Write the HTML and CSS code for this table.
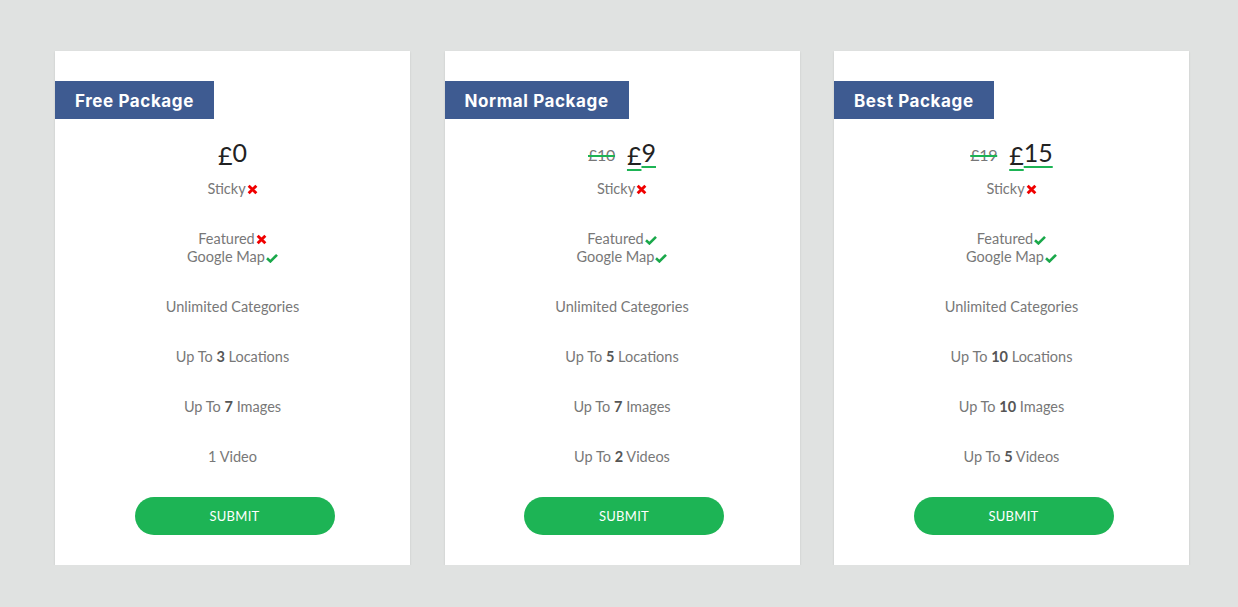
FILE: index.html
```html
<!DOCTYPE html>
<html>
<head>
<meta charset="utf-8">
<link rel="stylesheet" href="styles.css">
</head>
<body>
<div class="pricing">
  <div class="card">
    <div class="tag">Free Package</div>
    <div class="price"><span class="now"><span class="cur">£</span><span class="num">0</span></span></div>
    <ul class="features">
      <li>Sticky<svg class="ic" viewBox="0 0 10 10"><path d="M1.5 1.5L8.5 8.5M8.5 1.5L1.5 8.5" stroke="#f00000" stroke-width="2.6"/></svg></li>
      <li>Featured<svg class="ic" viewBox="0 0 10 10"><path d="M1.5 1.5L8.5 8.5M8.5 1.5L1.5 8.5" stroke="#f00000" stroke-width="2.6"/></svg><br>Google Map<svg class="ic ok" viewBox="0 0 12 10"><path d="M1 5.2L4.4 8.4L11 1.8" fill="none" stroke="#1aa84a" stroke-width="2.6"/></svg></li>
      <li>Unlimited Categories</li>
      <li>Up To <b>3</b> Locations</li>
      <li>Up To <b>7</b> Images</li>
      <li>1 Video</li>
    </ul>
    <div class="action"><button class="btn">SUBMIT</button></div>
  </div>
  <div class="card">
    <div class="tag">Normal Package</div>
    <div class="price"><span class="old">£10</span><span class="now sale"><span class="cur">£</span><span class="num">9</span></span></div>
    <ul class="features">
      <li>Sticky<svg class="ic" viewBox="0 0 10 10"><path d="M1.5 1.5L8.5 8.5M8.5 1.5L1.5 8.5" stroke="#f00000" stroke-width="2.6"/></svg></li>
      <li>Featured<svg class="ic ok" viewBox="0 0 12 10"><path d="M1 5.2L4.4 8.4L11 1.8" fill="none" stroke="#1aa84a" stroke-width="2.6"/></svg><br>Google Map<svg class="ic ok" viewBox="0 0 12 10"><path d="M1 5.2L4.4 8.4L11 1.8" fill="none" stroke="#1aa84a" stroke-width="2.6"/></svg></li>
      <li>Unlimited Categories</li>
      <li>Up To <b>5</b> Locations</li>
      <li>Up To <b>7</b> Images</li>
      <li>Up To <b>2</b> Videos</li>
    </ul>
    <div class="action"><button class="btn">SUBMIT</button></div>
  </div>
  <div class="card">
    <div class="tag">Best Package</div>
    <div class="price"><span class="old">£19</span><span class="now sale"><span class="cur">£</span><span class="num">15</span></span></div>
    <ul class="features">
      <li>Sticky<svg class="ic" viewBox="0 0 10 10"><path d="M1.5 1.5L8.5 8.5M8.5 1.5L1.5 8.5" stroke="#f00000" stroke-width="2.6"/></svg></li>
      <li>Featured<svg class="ic ok" viewBox="0 0 12 10"><path d="M1 5.2L4.4 8.4L11 1.8" fill="none" stroke="#1aa84a" stroke-width="2.6"/></svg><br>Google Map<svg class="ic ok" viewBox="0 0 12 10"><path d="M1 5.2L4.4 8.4L11 1.8" fill="none" stroke="#1aa84a" stroke-width="2.6"/></svg></li>
      <li>Unlimited Categories</li>
      <li>Up To <b>10</b> Locations</li>
      <li>Up To <b>10</b> Images</li>
      <li>Up To <b>5</b> Videos</li>
    </ul>
    <div class="action"><button class="btn">SUBMIT</button></div>
  </div>
</div>
</body>
</html>
```

FILE: styles.css
```css
html, body {
  margin: 0;
  padding: 0;
  background: #e0e2e1;
  font-family: Lato, "Open Sans", sans-serif;
}
.pricing {
  display: flex;
  gap: 34.5px;
  padding: 51px 0 0 55px;
}
.card {
  width: 355px;
  height: 514px;
  box-sizing: border-box;
  background: #fff;
  box-shadow: 0 1px 2px rgba(0,0,0,0.12);
  padding-top: 30px;
  text-align: center;
}
.tag {
  display: block;
  width: fit-content;
  background: #3e5b91;
  color: #fff;
  font-family: Inter, "Open Sans", sans-serif;
  font-weight: 700;
  font-size: 17px;
  height: 38px;
  line-height: 40px;
  padding: 0 20px;
  letter-spacing: 0.6px;
  text-align: left;
}
.price {
  margin-top: 21px;
  height: 30px;
  display: flex;
  justify-content: center;
  align-items: flex-end;
  gap: 12px;
  color: #222;
}
.old {
  font-size: 16px;
  color: #777;
  text-decoration: line-through;
  text-decoration-color: #1db455;
  text-decoration-thickness: 2px;
  margin-bottom: 6px;
  letter-spacing: -0.3px;
}
.now {
  font-size: 25px;
  line-height: 30px;
}
.now .num {
  position: relative;
  top: -3px;
}
.sale .cur, .sale .num {
  text-decoration: underline;
  text-decoration-color: #1db455;
  text-decoration-thickness: 2px;
  text-underline-offset: 4px;
}
.features {
  list-style: none;
  margin: 10px 0 0;
  padding: 0;
  color: #787878;
  font-size: 14.5px;
  line-height: 18px;
}
.features li {
  margin-bottom: 32px;
}
.features li:last-child {
  margin-bottom: 0;
}
.features b {
  color: #555;
  font-weight: 700;
}
.ic {
  width: 11px;
  height: 11px;
  margin-left: 1px;
  vertical-align: -1px;
}
.ic.ok {
  width: 12px;
  height: 10px;
}
.action {
  padding-left: 4px;
  margin-top: 31px;
}
.btn {
  display: block;
  margin: 0 auto;
  width: 200px;
  height: 38px;
  border: none;
  border-radius: 19px;
  background: #1db455;
  color: #fff;
  font-family: Lato, "Open Sans", sans-serif;
  font-size: 13px;
  letter-spacing: 0.3px;
}
```
